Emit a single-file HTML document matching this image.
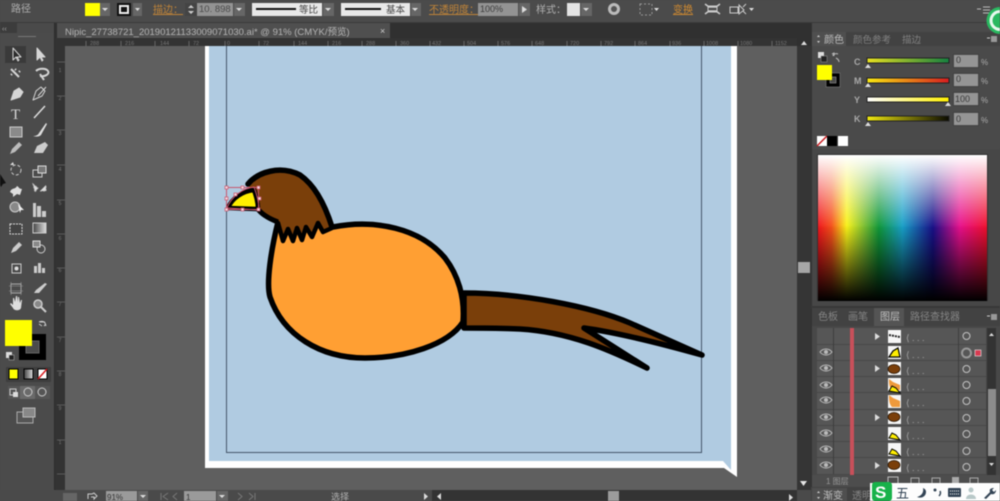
<!DOCTYPE html>
<html><head><meta charset="utf-8"><style>
html,body{margin:0;padding:0;background:#4a4a4a;width:1000px;height:501px;overflow:hidden}
svg{display:block;filter:blur(.45px)}
text{font-family:"Liberation Sans","Noto Sans CJK SC",sans-serif}
</style></head><body>
<svg width="1000" height="501" viewBox="0 0 1000 501" xmlns="http://www.w3.org/2000/svg">
<defs>
<linearGradient id="hue" x1="0" x2="1" y1="0" y2="0">
<stop offset="0" stop-color="#f0141c"/><stop offset=".08" stop-color="#f5501a"/><stop offset=".17" stop-color="#f8f218"/><stop offset=".27" stop-color="#80c030"/><stop offset=".36" stop-color="#10983a"/><stop offset=".5" stop-color="#18a0c8"/><stop offset=".68" stop-color="#181088"/><stop offset=".84" stop-color="#e8108c"/><stop offset="1" stop-color="#f0102c"/>
</linearGradient>
<linearGradient id="wo" x1="0" x2="0" y1="0" y2="1"><stop offset="0" stop-color="#fff"/><stop offset=".5" stop-color="#fff" stop-opacity="0"/></linearGradient>
<linearGradient id="bo" x1="0" x2="0" y1="0" y2="1"><stop offset=".48" stop-color="#000" stop-opacity="0"/><stop offset="1" stop-color="#000"/></linearGradient>
<linearGradient id="gc" x1="0" x2="1" y1="0" y2="0"><stop offset="0" stop-color="#e8e020"/><stop offset="1" stop-color="#158040"/></linearGradient>
<linearGradient id="gm" x1="0" x2="1" y1="0" y2="0"><stop offset="0" stop-color="#f8e810"/><stop offset="1" stop-color="#d81c20"/></linearGradient>
<linearGradient id="gy" x1="0" x2="1" y1="0" y2="0"><stop offset="0" stop-color="#fff"/><stop offset="1" stop-color="#fff000"/></linearGradient>
<linearGradient id="gk" x1="0" x2="1" y1="0" y2="0"><stop offset="0" stop-color="#f0e810"/><stop offset="1" stop-color="#0a0a00"/></linearGradient>
<linearGradient id="gg" x1="0" x2="1" y1="0" y2="0"><stop offset="0" stop-color="#444"/><stop offset="1" stop-color="#ddd"/></linearGradient>
</defs>

<!-- base -->
<rect width="1000" height="501" fill="#4a4a4a"/>
<!-- top toolbar -->
<rect x="0" y="0" width="1000" height="22" fill="#4b4b4b"/>
<rect x="0" y="22" width="1000" height="1" fill="#3a3a3a"/>
<rect x="55" y="23" width="756" height="23" fill="#303030"/>
<rect x="0" y="23" width="55" height="467" fill="#4a4a4a"/>

<text x="11" y="12" font-size="10" fill="#b0b0b0">路径</text>
<rect x="85" y="3" width="15" height="13" fill="#ffff00"/>
<rect x="100" y="3" width="10" height="13" fill="#666"/><path d="M102 8h6l-3 3z" fill="#ddd"/>
<rect x="117" y="3" width="14" height="13" fill="#111"/><rect x="120" y="6" width="8" height="7" fill="none" stroke="#eee" stroke-width="2"/>
<rect x="133" y="3" width="9" height="13" fill="#666"/><path d="M135 8h5l-2.500 3z" fill="#ddd"/>
<text x="153" y="13" font-size="10" fill="#c08438" text-decoration="underline">描边：</text>
<rect x="185" y="3" width="12" height="13" fill="#444"/><path d="M188 8l3-3 3 3zM188 11l3 3 3-3z" fill="#ccc"/>
<rect x="197" y="3" width="36" height="13" fill="#939393"/><text x="199" y="12" font-size="9.500" fill="#4a4a4a">10. 898</text>
<rect x="234" y="3" width="11" height="13" fill="#666"/><path d="M236 8h6l-3 3z" fill="#ddd"/>
<rect x="252" y="3" width="70" height="13" fill="#e8e8e8"/><rect x="256" y="8" width="40" height="2" fill="#111"/><text x="299" y="13" font-size="9.500" fill="#444">等比</text>
<rect x="323" y="3" width="11" height="13" fill="#666"/><path d="M325 8h6l-3 3z" fill="#ddd"/>
<rect x="341" y="3" width="69" height="13" fill="#e8e8e8"/><rect x="345" y="8" width="36" height="2" fill="#111"/><text x="386" y="13" font-size="9.500" fill="#444">基本</text>
<rect x="411" y="3" width="10" height="13" fill="#666"/><path d="M412 8h6l-3 3z" fill="#ddd"/>
<text x="429" y="13" font-size="10" fill="#c08438" text-decoration="underline">不透明度：</text>
<rect x="478" y="3" width="40" height="13" fill="#939393"/><text x="480" y="12" font-size="9" fill="#3c3c3c">100%</text>
<rect x="519" y="3" width="11" height="13" fill="#666"/><path d="M522 6l5 3.500-5 3.500z" fill="#ddd"/>
<text x="536" y="13" font-size="10" fill="#b0b0b0">样式：</text>
<rect x="567" y="3" width="13" height="13" fill="#e4e4e4"/>
<rect x="581" y="3" width="11" height="13" fill="#666"/><path d="M583 8h6l-3 3z" fill="#ddd"/>
<circle cx="614" cy="9" r="6" fill="#bbb"/><circle cx="614" cy="9" r="3" fill="#555"/>
<rect x="640" y="4" width="12" height="11" fill="none" stroke="#999" stroke-dasharray="2 2"/><path d="M654 8h5l-2.500 3z" fill="#ddd"/>
<text x="673" y="13" font-size="10" fill="#d08a30" text-decoration="underline">变换</text>
<path d="M705 4l4 3h7l4-3M705 14l4-3h7l4 3" fill="none" stroke="#ccc" stroke-width="1.500"/><rect x="708" y="6" width="9" height="6" fill="none" stroke="#ccc"/>
<path d="M730 7h8v6h-8zM739 5l5 5-5 4zM746 4l-3 3M746 14l-3-3" fill="none" stroke="#ccc"/><path d="M749 8h5l-2.500 3z" fill="#ddd"/>

<!-- document tab -->
<rect x="57" y="23" width="333" height="15" fill="#4f4f4f"/>
<text x="65" y="35" font-size="9.500" fill="#b4b4b4">Nipic_27738721_20190121133009071030.ai* @ 91% (CMYK/预览)</text>
<text x="380" y="34" font-size="9" fill="#cfcfcf">×</text>

<!-- horizontal ruler -->
<rect x="55" y="38" width="742" height="8" fill="#333"/>
<g font-size="5.500" fill="#777">
<text x="90" y="45">288</text><text x="125" y="45">216</text><text x="160" y="45">144</text><text x="193" y="45">72</text><text x="227" y="45">0</text><text x="263" y="45">72</text><text x="298" y="45">144</text><text x="332" y="45">216</text><text x="366" y="45">288</text><text x="400" y="45">360</text><text x="432" y="45">432</text><text x="467" y="45">504</text><text x="501" y="45">576</text><text x="535" y="45">648</text><text x="570" y="45">720</text><text x="604" y="45">792</text><text x="638" y="45">864</text><text x="672" y="45">936</text><text x="706" y="45">1008</text><text x="740" y="45">1080</text><text x="775" y="45">1152</text>
</g>
<g stroke="#666"><path d="M86 41v5M121 41v5M155 41v5M189 41v5M225 41v5M259 41v5M294 41v5M328 41v5M362 41v5M396 41v5M430 41v5M464 41v5M498 41v5M532 41v5M567 41v5M601 41v5M635 41v5M670 41v5M704 41v5M738 41v5M772 41v5"/></g>

<!-- vertical ruler -->
<rect x="55" y="38" width="10" height="452" fill="#333"/>
<g font-size="5" fill="#777" text-anchor="middle">
<text x="60" y="72">1</text><text x="60" y="100">2</text><text x="60" y="135">3</text><text x="60" y="171">4</text><text x="60" y="205">5</text><text x="60" y="240">6</text><text x="60" y="272">6</text><text x="60" y="306">7</text><text x="60" y="342">7</text><text x="60" y="376">8</text><text x="60" y="410">9</text><text x="60" y="444">1</text>
</g>
<g stroke="#5a5a5a"><path d="M57 62h8M57 96h8M57 130h8M57 165h8M57 200h8M57 234h8M57 268h8M57 302h8M57 337h8M57 371h8M57 405h8M57 440h8M57 474h8"/></g>

<!-- canvas -->
<rect x="65" y="46" width="732" height="444" fill="#5f5f5f"/>
<!-- page with folded corner -->
<path d="M205 46H737V477L724 468H205Z" fill="#fff"/>
<path d="M209 46H731V470L723 461H209Z" fill="#b0cbe1"/>
<path d="M226.500 46V452.500H701.500V46" fill="none" stroke="#46576a" stroke-width="1"/>

<!-- tail -->
<path d="M464 293C520 293 590 306 630 323C655 334 680 345 702 355C670 346 620 333 584 328L647 368C610 350 570 332 520 329C500 328 480 328 464 328Z" fill="#7a3f0a" stroke="#000" stroke-width="5.500" stroke-linejoin="round"/>
<!-- body -->
<path d="M333 227C375 219 420 228 445 258C458 275 465 297 463 322C448 345 405 358 365 358C320 358 283 335 270 297C266 283 271 250 278 222Z" fill="#ff9f33"/>
<path d="M333 227C375 219 420 228 445 258C458 275 465 297 463 322C448 345 405 358 365 358C320 358 283 335 270 297C266 283 271 250 278 222" fill="none" stroke="#000" stroke-width="5.500" stroke-linejoin="round"/>
<!-- head fill -->
<path d="M248 184C258 172 280 165 300 175C316 186 326 208 332 227L323 232L318 223L312 237L306 227L302 240L297 228L293 241L288 229L283 241L277 222C268 218 260 214 256 207Z" fill="#7a3f0a"/>
<!-- head outline -->
<path d="M248 184C258 172 280 165 300 175C316 186 326 208 332 227" fill="none" stroke="#000" stroke-width="5.500" stroke-linecap="round"/>
<path d="M257 208C262 215 270 219 278 222" fill="none" stroke="#000" stroke-width="5"/>
<!-- collar -->
<path d="M278 223L283 241L288 229L293 241L297 228L302 240L306 227L312 237L318 223L323 232L332 228" fill="none" stroke="#000" stroke-width="4.500" stroke-linejoin="round" stroke-linecap="round"/>
<!-- beak -->
<path d="M228 208C232 198 243 191 254 190C256 196 258 202 258 209Z" fill="#ffee00" stroke="#000" stroke-width="4.500" stroke-linejoin="round"/>
<!-- selection -->
<g fill="none" stroke="#c8566e" stroke-width="1"><rect x="226.500" y="187.500" width="32" height="22"/><path d="M227 208C231 197 243 188 254 187C257 195 259 202 259 210Z"/></g>
<g fill="#f6d6dc" stroke="#c8566e" stroke-width=".7"><rect x="225" y="186" width="3" height="3"/><rect x="241" y="186" width="3" height="3"/><rect x="257" y="186" width="3" height="3"/><rect x="225" y="197" width="3" height="3"/><rect x="258" y="197" width="3" height="3"/><rect x="225" y="208" width="3" height="3"/><rect x="241" y="208" width="3" height="3"/><rect x="257" y="208" width="3" height="3"/><rect x="234" y="193" width="3" height="3"/></g>

<!-- left toolbar -->
<rect x="0" y="23" width="55" height="467" fill="#4a4a4a"/>
<rect x="0" y="23" width="17" height="11" fill="#3c3c3c"/>
<text x="2" y="31" font-size="7" fill="#aaa">‹‹</text>
<rect x="0" y="33" width="54" height="457" fill="#4b4b4b"/>
<rect x="54" y="23" width="1" height="467" fill="#2c2c2c"/>
<rect x="18" y="36" width="18" height="1" fill="#777"/>
<rect x="5" y="46" width="21" height="17" fill="#3a3a3a"/>
<g fill="#d6d6d6" stroke="#d6d6d6" stroke-width="1" stroke-linejoin="round">
<path d="M13 48v12l3-3 2 4 1-1-2-3h4Z" fill="#2c2c2c"/>
<path d="M37 48v12l3-3 2 4 1-1-2-3h4Z"/>
<path d="M11 69l8 8M16 70l-1-1M19 72l1-1M12 74l-1 1" fill="none" stroke-width="2"/>
<path d="M36 71c3-3 10-3 12 0s-3 6-8 5M40 74l4 6" fill="none" stroke-width="2"/>
<path d="M11 100l3-9 5-3 4 4-3 5Z"/>
<path d="M33 100l3-9 5-4 4 4-3 5ZM38 96l8-9" fill="none"/>
</g>
<text x="11" y="119" font-size="15" fill="#d8d8d8" style="font-family:'Liberation Serif',serif">T</text>
<path d="M34 118L45 106" stroke="#ddd" stroke-width="1.500"/>
<rect x="10" y="127" width="12" height="10" fill="#8a8a8a" stroke="#ccc"/>
<path d="M33 136c3 0 5-1 6-3l7-10 1 1-6 11c-2 2-5 2-8 1Z" fill="#ddd"/>
<path d="M10 154l2-5 7-7 3 3-7 7Z" fill="#bbb"/>
<path d="M34 153l3-7 8-4 3 3-5 8Z" fill="#ccc"/>
<circle cx="16" cy="170" r="5" fill="none" stroke="#ccc" stroke-dasharray="3 2"/><path d="M10 165l4 0-1-3z" fill="#ddd"/>
<rect x="33" y="170" width="9" height="7" fill="none" stroke="#ccc"/><rect x="38" y="166" width="8" height="7" fill="#777" stroke="#ddd"/>
<path d="M10 192c2-5 5-2 7-6 2 1 2 3 5 3l-2 6-3-1-4 3 0-3Z" fill="#ddd"/>
<path d="M33 184l5 4-3 4zM40 191h6v-6" fill="#ddd" stroke="#bbb" stroke-dasharray="2 1"/>
<circle cx="15" cy="207" r="5" fill="#888" stroke="#ccc"/><path d="M18 204l6 6-3 0-1 3Z" fill="#eee"/>
<path d="M33 203h3v14h-3zM37 206h4v11h-4zM42 211h4v6h-4z" fill="#ccc"/>
<rect x="10" y="224" width="12" height="10" fill="#444" stroke="#ddd" stroke-dasharray="2 1"/>
<rect x="33" y="223" width="13" height="10" fill="url(#gg)" stroke="#ccc"/>
<path d="M11 253l2-5 6-6 3 3-6 6Z" fill="#ccc"/>
<circle cx="41" cy="249" r="4" fill="none" stroke="#ccc"/><rect x="33" y="241" width="7" height="6" fill="#888" stroke="#ddd"/>
<rect x="12" y="264" width="9" height="9" fill="none" stroke="#ccc"/><circle cx="16.500" cy="268.500" r="2" fill="#ddd"/>
<path d="M34 273v-7h3v7zM38 273v-10h3v10zM42 273v-5h3v5z" fill="#ccc"/>
<rect x="11" y="284" width="10" height="9" fill="none" stroke="#aaa"/><path d="M11 282v13M21 282v13M9 286h14M9 291h14" stroke="#999" stroke-width=".6"/>
<path d="M34 293l2-3 9-7 2 1-8 9Z" fill="#ccc"/>
<path d="M10 304l3 4c1 3 7 3 8 0l1-8-1 0-1 3-1-6-1 0 0 5-1-6-1 0-1 6-1-4-1 0 0 7-2-2Z" fill="#ddd"/>
<circle cx="38" cy="304" r="4" fill="#888" stroke="#ccc" stroke-width="1.500"/><path d="M41 307l5 5" stroke="#ccc" stroke-width="2"/>
<!-- fill/stroke big -->
<rect x="19" y="334" width="27" height="26" fill="#000"/>
<rect x="26" y="341" width="13" height="12" fill="#4b4b4b" stroke="#666"/>
<rect x="5" y="320" width="27" height="26" fill="#ffff00"/>
<path d="M39 322c2-1 5-1 6 1l1 3M46 324l-2 2M45 322h-5M42 326l-3-2" fill="none" stroke="#ccc" stroke-width="1"/>
<rect x="6" y="352" width="6" height="6" fill="#ddd"/><rect x="9" y="355" width="5" height="5" fill="#222" stroke="#bbb" stroke-width=".5"/>
<!-- mode buttons -->
<rect x="6" y="367" width="45" height="15" fill="#3e3e3e"/>
<rect x="9" y="369" width="9" height="10" fill="#ffff00" stroke="#000"/>
<rect x="24" y="369" width="9" height="10" fill="url(#gg)" stroke="#000"/>
<rect x="38" y="369" width="9" height="10" fill="#fff" stroke="#000"/><path d="M38 379l9-10" stroke="#d81c20" stroke-width="1.500"/>
<rect x="8" y="386" width="42" height="13" fill="#555"/><rect x="20" y="386" width="15" height="13" fill="#6a6a6a"/>
<rect x="10" y="389" width="6" height="6" fill="none" stroke="#ccc"/><rect x="13" y="392" width="5" height="5" fill="#ddd"/>
<circle cx="28" cy="392" r="4" fill="none" stroke="#ccc"/><circle cx="42" cy="392" r="4" fill="none" stroke="#ccc"/>
<rect x="17" y="412" width="16" height="11" fill="#555" stroke="#aaa"/><rect x="23" y="408" width="12" height="9" fill="#888" stroke="#bbb"/>
<!-- cursor -->
<path d="M0 174L6 183L3 184L1 187L0 185Z" fill="#111"/>

<!-- v scrollbar -->
<rect x="797" y="46" width="14" height="444" fill="#353535"/>
<rect x="798" y="262" width="12" height="11" fill="#a6a6a6"/>
<path d="M801 45l3-4 3 4z" fill="#ddd"/>
<path d="M800 481h7l-3.500 5z" fill="#e6e6e6"/>

<!-- status bar -->
<rect x="55" y="490" width="756" height="11" fill="#4a4a4a"/>
<rect x="63" y="493" width="14" height="8" fill="#666"/>
<path d="M88 499v-5h4l2-1 3 3-3 3v-2h-3" fill="none" stroke="#ccc"/>
<rect x="106" y="491" width="31" height="10" fill="#9a9a9a"/><text x="107" y="500" font-size="8" fill="#333">91%</text>
<rect x="138" y="491" width="10" height="10" fill="#666"/><path d="M140 495h6l-3 3z" fill="#ddd"/>
<path d="M161 493v7M168 493l-5 3.500 5 3.500M177 493l-4 3.500 4 3.500M238 493l4 3.500-4 3.500M249 493l4 3.500-4 3.500M255 493v7" fill="none" stroke="#777"/>
<rect x="184" y="491" width="32" height="10" fill="#9a9a9a"/><text x="186" y="500" font-size="8" fill="#333">1</text>
<rect x="217" y="491" width="11" height="10" fill="#666"/><path d="M219 495h6l-3 3z" fill="#ddd"/>
<text x="331" y="500" font-size="9" fill="#b0b0b0">选择</text>
<path d="M424 493l4 3.500-4 3.500z" fill="#ddd"/>
<rect x="432" y="490" width="365" height="11" fill="#333"/>
<path d="M441 493l-4 3.500 4 3.500z" fill="#ddd"/>
<rect x="608" y="491" width="11" height="10" fill="#9c9c9c"/>
<path d="M789 494l4 3.500-4 3.500z" fill="#ddd"/>

<!-- right panel -->
<rect x="811" y="23" width="189" height="478" fill="#4a4a4a"/>
<rect x="811" y="23" width="1" height="478" fill="#333"/>
<path d="M977 9h4M983 7h7M983 10h7M983 13h7" stroke="#bbb"/>
<!-- color panel tabs -->
<rect x="812" y="32" width="188" height="14" fill="#424242"/>
<rect x="812" y="32" width="34" height="14" fill="#4f4f4f"/>
<text x="824" y="43" font-size="10" fill="#bcbcbc">颜色</text>
<text x="853" y="43" font-size="9.500" fill="#808080">颜色参考</text>
<text x="902" y="43" font-size="9.500" fill="#808080">描边</text>
<path d="M817 37l1.500-2 1.500 2zM817 41l1.500 2 1.500-2z" fill="#ccc"/>
<path d="M987 38h3" stroke="#ccc"/><rect x="991" y="36" width="6" height="6" fill="#999"/>
<!-- default + fill -->
<rect x="818" y="52" width="6" height="6" fill="#ddd"/><rect x="821" y="56" width="6" height="6" fill="#222" stroke="#999" stroke-width=".5"/>
<path d="M833 56c0-2 3-3 5-2M839 62c0-2-1-3-3-4M832 54l2-1 0 3" fill="none" stroke="#bbb"/>
<rect x="826" y="73" width="14" height="14" fill="#000" stroke="#777" stroke-width=".7"/><rect x="830" y="77" width="6" height="6" fill="#4a4a4a" stroke="#888" stroke-width=".7"/>
<rect x="817" y="65" width="15" height="15" fill="#ffff00"/>
<!-- CMYK -->
<g font-size="9" fill="#a8a8a8" font-weight="bold">
<text x="854" y="65">C</text><text x="854" y="84">M</text><text x="854" y="103">Y</text><text x="854" y="122">K</text>
</g>
<rect x="867" y="58" width="82" height="5" fill="url(#gc)" stroke="#222"/>
<rect x="867" y="78" width="82" height="5" fill="url(#gm)" stroke="#222"/>
<rect x="867" y="97" width="82" height="5" fill="url(#gy)" stroke="#222"/>
<rect x="867" y="116" width="82" height="5" fill="url(#gk)" stroke="#222"/>
<g fill="#ddd"><path d="M865 68l3-4 3 4zM865 87l3-4 3 4zM945 106l3-4 3 4zM865 126l3-4 3 4z"/></g>
<g fill="#959595" stroke="#3a3a3a" stroke-width=".7">
<rect x="953.500" y="54.500" width="25" height="13"/><rect x="953.500" y="73.500" width="25" height="13"/><rect x="953.500" y="92.500" width="25" height="13"/><rect x="953.500" y="112.500" width="25" height="13"/>
</g>
<g font-size="9" fill="#3a3a3a">
<text x="956" y="63">0</text><text x="956" y="82">0</text><text x="955" y="102">100</text><text x="956" y="122">0</text>
</g>
<g font-size="8" fill="#aaa"><text x="981" y="65">%</text><text x="981" y="84">%</text><text x="981" y="103">%</text><text x="981" y="123">%</text></g>
<rect x="817" y="136" width="10" height="10" fill="#fff"/><path d="M817 146l10-10" stroke="#c81c20" stroke-width="1.500"/>
<rect x="827" y="136" width="10" height="10" fill="#000"/><rect x="838" y="136" width="10" height="10" fill="#fff"/>
<!-- spectrum -->
<rect x="812" y="149" width="188" height="158" fill="#474747"/>
<rect x="817" y="154" width="171" height="147" fill="#333"/>
<rect x="818" y="155" width="169" height="146" fill="url(#hue)"/>
<rect x="818" y="155" width="169" height="146" fill="url(#wo)"/>
<rect x="818" y="155" width="169" height="146" fill="url(#bo)"/>
<rect x="811" y="306" width="189" height="2" fill="#383838"/>
<!-- layers panel -->
<rect x="812" y="308" width="188" height="18" fill="#424242"/>
<rect x="874" y="308" width="30" height="18" fill="#545454"/>
<text x="818" y="320" font-size="10" fill="#848484">色板</text>
<text x="848" y="320" font-size="10" fill="#848484">画笔</text>
<text x="880" y="320" font-size="10" fill="#c0c0c0">图层</text>
<text x="910" y="320" font-size="10" fill="#848484">路径查找器</text>
<path d="M987 316h3" stroke="#ccc"/><rect x="991" y="314" width="6" height="6" fill="#999"/>
<rect x="812" y="326" width="188" height="150" fill="#484848"/>
<!-- rows -->
<g fill="#565656">
<rect x="817" y="328" width="169" height="16"/><rect x="817" y="345" width="169" height="15"/><rect x="817" y="361" width="169" height="15"/><rect x="817" y="377" width="169" height="15"/><rect x="817" y="393" width="169" height="16"/><rect x="817" y="410" width="169" height="15"/><rect x="817" y="426" width="169" height="15"/><rect x="817" y="442" width="169" height="15"/><rect x="817" y="458" width="169" height="16"/>
</g>
<g stroke="#3e3e3e"><path d="M833.500 328V474M958.500 328V474"/></g>
<rect x="850" y="328" width="4" height="150" fill="#c8505a"/>
<!-- eyes -->
<g fill="none" stroke="#bbb" stroke-width="1"><path d="M820 352c3-4 9-4 12 0-3 4-9 4-12 0ZM820 368c3-4 9-4 12 0-3 4-9 4-12 0ZM820 385c3-4 9-4 12 0-3 4-9 4-12 0ZM820 400c3-4 9-4 12 0-3 4-9 4-12 0ZM820 417c3-4 9-4 12 0-3 4-9 4-12 0ZM820 433c3-4 9-4 12 0-3 4-9 4-12 0ZM820 449c3-4 9-4 12 0-3 4-9 4-12 0ZM820 465c3-4 9-4 12 0-3 4-9 4-12 0Z"/></g>
<g fill="#bbb"><circle cx="826" cy="352" r="2"/><circle cx="826" cy="368" r="2"/><circle cx="826" cy="385" r="2"/><circle cx="826" cy="400" r="2"/><circle cx="826" cy="417" r="2"/><circle cx="826" cy="433" r="2"/><circle cx="826" cy="449" r="2"/><circle cx="826" cy="465" r="2"/></g>
<!-- arrows -->
<g fill="#ddd"><path d="M875 333l5 3.500-5 3.500zM875 365l5 3.500-5 3.500zM875 414l5 3.500-5 3.500zM875 462l5 3.500-5 3.500z"/></g>
<!-- thumbs -->
<g fill="#f6f6f6"><rect x="888" y="330" width="13" height="13"/><rect x="888" y="346" width="13" height="13"/><rect x="888" y="362" width="13" height="13"/><rect x="888" y="378" width="13" height="13"/><rect x="888" y="395" width="13" height="13"/><rect x="888" y="411" width="13" height="13"/><rect x="888" y="427" width="13" height="13"/><rect x="888" y="443" width="13" height="13"/><rect x="888" y="459" width="13" height="13"/></g>
<path d="M889 335l11 2" stroke="#222" stroke-width="2" stroke-dasharray="2 1"/>
<path d="M889 357l4-6 5-3 2 9Z" fill="#ffee00" stroke="#000" stroke-width="1.200"/>
<g fill="#7a3f0a" stroke="#221100" stroke-width=".7"><ellipse cx="894" cy="369" rx="6" ry="4.500"/><ellipse cx="894" cy="417" rx="6" ry="4.500"/><ellipse cx="894" cy="465" rx="6" ry="4.500"/></g>
<path d="M889 379l4 3 7 3v5h-8c-3-3-3-7-3-11Z" fill="#ef9a3c"/>
<path d="M889 411l4 3 7 3v6h-8c-3-3-3-8-3-12Z" fill="#ef9a3c" transform="translate(0,-16)"/>
<path d="M889 405l3-5 4 2 4 5Z" fill="#ffee00" stroke="#000" stroke-width="1" transform="translate(0,33)"/>
<path d="M889 405l3-5 4 2 4 5Z" fill="#ffee00" stroke="#000" stroke-width="1" transform="translate(0,49)"/>
<path d="M889 405l3-5 4 2 4 5Z" fill="#ffee00" stroke="#000" stroke-width="1" transform="translate(0,-14)"/>
<!-- names -->
<g font-size="9" fill="#a8a8a8">
<text x="906" y="341">⟨ . . .</text><text x="906" y="358">⟨ . . .</text><text x="906" y="374">⟨ . . .</text><text x="906" y="390">⟨ . . .</text><text x="906" y="406">⟨ . . .</text><text x="906" y="423">⟨ . . .</text><text x="906" y="439">⟨ . . .</text><text x="906" y="455">⟨ . . .</text><text x="906" y="471">⟨ . . .</text>
</g>
<!-- targets -->
<g fill="none" stroke="#c4c4c4"><circle cx="966.500" cy="336" r="3.500"/><circle cx="966.500" cy="353" r="4.500" stroke-width="2" stroke="#999"/><circle cx="966.500" cy="369" r="3.500"/><circle cx="966.500" cy="385" r="3.500"/><circle cx="966.500" cy="401" r="3.500"/><circle cx="966.500" cy="418" r="3.500"/><circle cx="966.500" cy="434" r="3.500"/><circle cx="966.500" cy="451" r="3.500"/><circle cx="966.500" cy="467" r="3.500"/></g>
<rect x="975" y="350" width="6" height="6" fill="#d83a50" stroke="#eee" stroke-width=".6"/>
<!-- layer scrollbar -->
<rect x="987" y="328" width="9" height="147" fill="#333"/>
<rect x="988" y="389" width="8" height="67" fill="#8c8c8c"/>
<path d="M989 336l2.500-3 2.500 3zM989 463l2.500 3 2.500-3z" fill="#ddd"/>
<!-- bottom bar -->
<rect x="812" y="475" width="188" height="12" fill="#4d4d4d"/>
<text x="826" y="484" font-size="8" fill="#999">1 图层</text>
<rect x="888" y="477" width="10" height="9" fill="none" stroke="#bbb"/>
<rect x="911" y="478" width="8" height="8" fill="none" stroke="#aaa"/><rect x="932" y="478" width="8" height="8" fill="none" stroke="#aaa"/><rect x="952" y="477" width="7" height="9" fill="#aaa"/>
<rect x="970" y="478" width="8" height="8" fill="none" stroke="#aaa"/>
<!-- gradient tabs -->
<rect x="811" y="487" width="189" height="14" fill="#424242"/>
<rect x="812" y="488" width="35" height="13" fill="#4f4f4f"/>
<text x="823" y="499" font-size="10" fill="#c0c0c0">渐变</text>
<text x="852" y="499" font-size="10" fill="#848484">透明度</text>
<path d="M817 493l1.500-2 1.500 2zM817 497l1.500 2 1.500-2z" fill="#ccc"/>
<!-- IME bar -->
<rect x="870" y="483" width="130" height="18" fill="#fdfdfd"/>
<rect x="872" y="482" width="20" height="19" rx="3" fill="#18b24a"/>
<text x="875" y="498" font-size="17" font-weight="bold" fill="#fff">S</text>
<text x="896" y="498" font-size="13" fill="#345">五</text>
<path d="M923 488c1 5-2 8-6 9 5 2 9-1 9-5 0-2-1-3-3-4Z" fill="#345"/>
<circle cx="935" cy="490" r="1.500" fill="#345"/><path d="M940 491c1 2 0 4-1 5" stroke="#345" stroke-width="1.500" fill="none"/>
<rect x="948" y="488" width="13" height="9" rx="1" fill="#345"/><path d="M950 491h9M950 494h9" stroke="#fff" stroke-dasharray="1 1"/>
<circle cx="971" cy="490" r="2.500" fill="#b8c8c8"/><path d="M966 499c0-6 10-6 10 0Z" fill="#b8c8c8"/>
<path d="M984 498l6-6c-1-3 1-4 4-4l-2 2 2 2 2-2c0 3-2 5-5 4l-5 5Z" fill="#345"/>
<!-- green corner circle -->
<path d="M1000 7a13 13 0 0 0 0 27Z" fill="#2ab860"/><path d="M1000 10a10 10 0 0 0 0 21Z" fill="#e8f8ee"/><path d="M1000 13a7 7 0 0 0 0 15Z" fill="#2ab860"/>
</svg>
</body></html>
